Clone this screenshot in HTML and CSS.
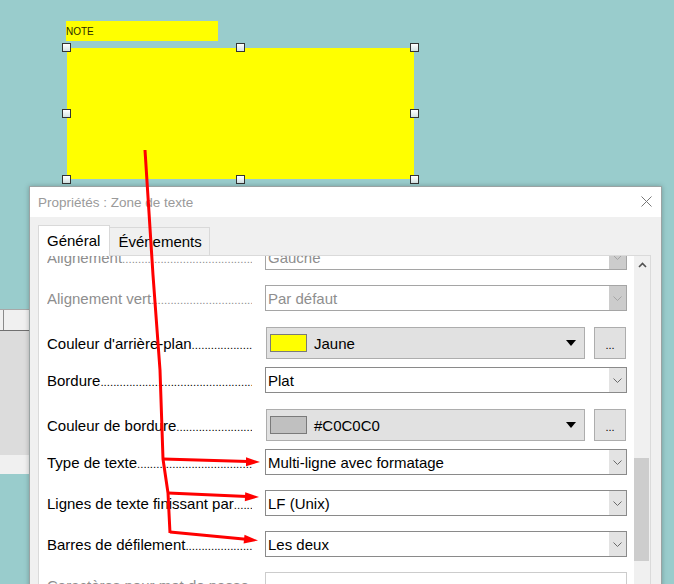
FILE: index.html
```html
<!DOCTYPE html>
<html lang="fr">
<head>
<meta charset="utf-8">
<title>Propriétés : Zone de texte</title>
<link rel="stylesheet" href="styles.css">
</head>
<body>
<div class="canvas">
  <div class="note-label">NOTE</div>
  <div class="shape">
    <span class="handle h-l h-t"></span>
    <span class="handle h-c h-t"></span>
    <span class="handle h-r h-t"></span>
    <span class="handle h-l h-m"></span>
    <span class="handle h-r h-m"></span>
    <span class="handle h-l h-b"></span>
    <span class="handle h-c h-b"></span>
    <span class="handle h-r h-b"></span>
  </div>

  <div class="bgwin">
    <div class="bgwin-head"><span class="bgwin-cell"></span></div>
    <div class="bgwin-body"></div>
    <div class="bgwin-foot"></div>
  </div>

  <div class="dialog">
    <div class="titlebar">
      <span class="title">Propriétés : Zone de texte</span>
      <svg class="close" width="11" height="11" viewBox="0 0 11 11"><path d="M0.5 0.5L10.5 10.5M10.5 0.5L0.5 10.5" stroke="#777" stroke-width="1" fill="none"/></svg>
    </div>
    <div class="dlg-body">
      <div class="tabs">
        <div class="tab active">Général</div>
        <div class="tab">Événements</div>
      </div>
      <div class="panel">
        <div class="rows">
          <div class="row disabled">
            <div class="label"><span class="ltext">Alignement</span><span class="dots">..............................................................................................</span></div>
            <div class="select"><span class="val">Gauche</span><span class="btn"><svg width="9" height="5" viewBox="0 0 9 5"><polyline points="0.5,0.5 4.5,4.5 8.5,0.5" fill="none" stroke="#a5a5a5" stroke-width="1"/></svg></span></div>
          </div>
          <div class="row disabled">
            <div class="label"><span class="ltext">Alignement vert</span><span class="dots">..............................................................................................</span></div>
            <div class="select"><span class="val">Par défaut</span><span class="btn"><svg width="9" height="5" viewBox="0 0 9 5"><polyline points="0.5,0.5 4.5,4.5 8.5,0.5" fill="none" stroke="#a5a5a5" stroke-width="1"/></svg></span></div>
          </div>
          <div class="row color-row">
            <div class="label"><span class="ltext">Couleur d'arrière-plan</span><span class="dots">..............................................................................................</span></div>
            <div class="colorbox"><span class="swatch sw-yellow"></span><span class="cval">Jaune</span><span class="tri"></span></div>
            <div class="more">...</div>
          </div>
          <div class="row">
            <div class="label"><span class="ltext">Bordure</span><span class="dots">..............................................................................................</span></div>
            <div class="select"><span class="val">Plat</span><span class="btn"><svg width="9" height="5" viewBox="0 0 9 5"><polyline points="0.5,0.5 4.5,4.5 8.5,0.5" fill="none" stroke="#6a6a6a" stroke-width="1"/></svg></span></div>
          </div>
          <div class="row color-row">
            <div class="label"><span class="ltext">Couleur de bordure</span><span class="dots">..............................................................................................</span></div>
            <div class="colorbox"><span class="swatch sw-silver"></span><span class="cval">#C0C0C0</span><span class="tri"></span></div>
            <div class="more">...</div>
          </div>
          <div class="row">
            <div class="label"><span class="ltext">Type de texte</span><span class="dots">..............................................................................................</span></div>
            <div class="select"><span class="val">Multi-ligne avec formatage</span><span class="btn"><svg width="9" height="5" viewBox="0 0 9 5"><polyline points="0.5,0.5 4.5,4.5 8.5,0.5" fill="none" stroke="#6a6a6a" stroke-width="1"/></svg></span></div>
          </div>
          <div class="row">
            <div class="label"><span class="ltext">Lignes de texte finissant par</span><span class="dots">..............................................................................................</span></div>
            <div class="select"><span class="val">LF (Unix)</span><span class="btn"><svg width="9" height="5" viewBox="0 0 9 5"><polyline points="0.5,0.5 4.5,4.5 8.5,0.5" fill="none" stroke="#6a6a6a" stroke-width="1"/></svg></span></div>
          </div>
          <div class="row">
            <div class="label"><span class="ltext">Barres de défilement</span><span class="dots">..............................................................................................</span></div>
            <div class="select"><span class="val">Les deux</span><span class="btn"><svg width="9" height="5" viewBox="0 0 9 5"><polyline points="0.5,0.5 4.5,4.5 8.5,0.5" fill="none" stroke="#6a6a6a" stroke-width="1"/></svg></span></div>
          </div>
          <div class="row disabled">
            <div class="label"><span class="ltext">Caractères pour mot de passe</span><span class="dots">..............................................................................................</span></div>
            <div class="textbox"></div>
          </div>
        </div>
        <div class="scrollbar">
          <span class="sb-up"><svg width="9" height="6" viewBox="0 0 9 6"><polyline points="1,5 4.5,1.5 8,5" fill="none" stroke="#505050" stroke-width="1.6"/></svg></span>
          <div class="thumb"></div>
        </div>
      </div>
    </div>
  </div>

  <svg class="arrows" width="674" height="584" viewBox="0 0 674 584">
    <polyline points="145,150 153,275 160,370 163,459 168,493 170,533" fill="none" stroke="#ff0000" stroke-width="3" stroke-linejoin="round"/>
    <line x1="163" y1="459" x2="248" y2="461.6" stroke="#ff0000" stroke-width="3"/>
    <polygon points="260,462 246,457.3 246,466.3" fill="#ff0000"/>
    <line x1="168" y1="493" x2="247" y2="496.5" stroke="#ff0000" stroke-width="3"/>
    <polygon points="259,497 245.2,492.2 244.8,501.2" fill="#ff0000"/>
    <line x1="170" y1="532" x2="246" y2="539.2" stroke="#ff0000" stroke-width="3"/>
    <polygon points="258,540.5 244.5,534.7 243.6,543.6" fill="#ff0000"/>
  </svg>
</div>
</body>
</html>
```

FILE: styles.css
```css
html, body {
  margin: 0;
  padding: 0;
}

body {
  width: 674px;
  height: 584px;
  overflow: hidden;
  background: #99cccc;
  font-family: "Liberation Sans", Arial, sans-serif;
  font-size: 15px;
  color: #000;
}

.canvas {
  position: relative;
  width: 674px;
  height: 584px;
  overflow: hidden;
}

/* ---------- drawing canvas items ---------- */
.note-label {
  position: absolute;
  left: 66px;
  top: 21px;
  width: 152px;
  height: 20px;
  background: #ffff00;
  font-size: 10px;
  line-height: 21px;
  color: #2a2a00;
}

.shape {
  position: absolute;
  left: 67px;
  top: 48px;
  width: 347px;
  height: 131px;
  background: #ffff00;
}

.handle {
  position: absolute;
  width: 9px;
  height: 9px;
  box-sizing: border-box;
  border: 1px solid #333;
  background: linear-gradient(#ffffff, #d5e3e3);
}
.h-l { left: -5px; }
.h-c { left: 169px; }
.h-r { left: 343px; }
.h-t { top: -5px; }
.h-m { top: 61px; }
.h-b { top: 127px; }

/* ---------- background window fragment ---------- */
.bgwin {
  position: absolute;
  left: 0;
  top: 309px;
  width: 29px;
  display: flex;
  flex-direction: column;
}
.bgwin-head {
  background: #f0f0f0;
  border-top: 1px solid #a8a8a8;
  border-bottom: 1px solid #707070;
  box-sizing: border-box;
  height: 22px;
  position: relative;
}
.bgwin-cell {
  position: absolute;
  left: 3px;
  top: 0;
  bottom: 0;
  width: 1px;
  background: #8a8a8a;
}
.bgwin-body {
  height: 124px;
  background: #dcdcdc;
}
.bgwin-foot {
  height: 19px;
  background: #f0f0f0;
}

/* ---------- dialog ---------- */
.dialog {
  position: absolute;
  left: 29px;
  top: 186px;
  width: 633px;
  height: 430px;
  box-sizing: border-box;
  border: 1px solid #9aa3a3;
  background: #f0f0f0;
  display: flex;
  flex-direction: column;
  box-shadow: 0 0 5px rgba(0, 0, 0, 0.25);
}

.titlebar {
  height: 30px;
  flex: none;
  background: #ffffff;
  display: flex;
  align-items: center;
  padding: 0 9px 0 8px;
}
.title {
  flex: 1;
  color: #9a9a9a;
  font-size: 13.5px;
  padding-top: 1px;
}
.close {
  display: block;
  margin-top: -1px;
}

.dlg-body {
  flex: 1;
  display: flex;
  flex-direction: column;
  padding: 8px 10px 0 8px;
  min-height: 0;
}

.tabs {
  display: flex;
  align-items: flex-end;
  height: 30px;
  flex: none;
}
.tab {
  box-sizing: border-box;
  height: 28px;
  padding: 0 7px 0 8px;
  border: 1px solid #d9d9d9;
  border-bottom: none;
  background: #f0f0f0;
  line-height: 27px;
  margin-left: -1px;
}
.tab.active {
  height: 31px;
  margin-left: 0;
  margin-bottom: -1px;
  padding: 0 9px 0 8px;
  background: #ffffff;
  line-height: 30px;
  position: relative;
  z-index: 1;
}

.panel {
  flex: 1;
  display: flex;
  background: #ffffff;
  border: 1px solid #dadada;
  overflow: hidden;
  min-height: 0;
}

.rows {
  flex: 1;
  display: flex;
  flex-direction: column;
  gap: 15px;
  padding: 0 7px 0 8px;
  margin-top: -12px;
}

.row {
  display: flex;
  align-items: center;
  flex: none;
}
.row.color-row {
  margin-top: 1px;
  margin-bottom: -7px;
}

.label {
  width: 205px;
  flex: none;
  margin-right: 13px;
  display: flex;
  align-items: baseline;
  white-space: nowrap;
  overflow: hidden;
  padding-top: 1px;
}
.ltext {
  flex: none;
}
.dots {
  flex: 1;
  min-width: 0;
  overflow: hidden;
  font-size: 11.5px;
}
.row.disabled .label {
  color: #8e8e8e;
}

.select {
  width: 362px;
  height: 26px;
  box-sizing: border-box;
  border: 1px solid #8a8a8a;
  background: #ffffff;
  display: flex;
  align-items: center;
  flex: none;
}
.val {
  flex: 1;
  padding-left: 2px;
  white-space: nowrap;
}
.btn {
  width: 17px;
  height: 24px;
  background: #e3e3e3;
  display: flex;
  align-items: center;
  justify-content: center;
}
.btn svg {
  display: block;
}
.row.disabled .select {
  border-color: #a5a5a5;
}
.row.disabled .val {
  color: #8e8e8e;
}
.row.disabled .btn {
  background: #cccccc;
}

.colorbox {
  width: 319px;
  height: 32px;
  margin-left: 1px;
  box-sizing: border-box;
  border: 1px solid #adadad;
  background: #e1e1e1;
  display: flex;
  align-items: center;
  padding-left: 3px;
  flex: none;
}
.swatch {
  width: 37px;
  height: 18px;
  box-sizing: border-box;
  border: 1px solid #7a7a7a;
  flex: none;
}
.sw-yellow { background: #ffff00; }
.sw-silver { background: #c0c0c0; }
.cval {
  flex: 1;
  margin-left: 7px;
}
.tri {
  width: 0;
  height: 0;
  border-left: 5px solid transparent;
  border-right: 5px solid transparent;
  border-top: 6px solid #000;
  margin-right: 8px;
}

.more {
  width: 32px;
  height: 32px;
  margin-left: 9px;
  box-sizing: border-box;
  border: 1px solid #adadad;
  background: #e1e1e1;
  font-size: 11px;
  text-align: center;
  line-height: 34px;
  flex: none;
}

.textbox {
  width: 362px;
  height: 26px;
  box-sizing: border-box;
  border: 1px solid #cccccc;
  background: #ffffff;
  flex: none;
}

.scrollbar {
  width: 16px;
  flex: none;
  background: #f0f0f0;
  display: flex;
  flex-direction: column;
}
.sb-up {
  height: 17px;
  display: flex;
  align-items: center;
  justify-content: center;
}
.sb-up svg {
  display: block;
}
.thumb {
  margin-top: 185px;
  height: 103px;
  width: 15px;
  background: #cdcdcd;
}

/* ---------- annotation overlay ---------- */
.arrows {
  position: absolute;
  left: 0;
  top: 0;
  pointer-events: none;
  z-index: 5;
}
```
